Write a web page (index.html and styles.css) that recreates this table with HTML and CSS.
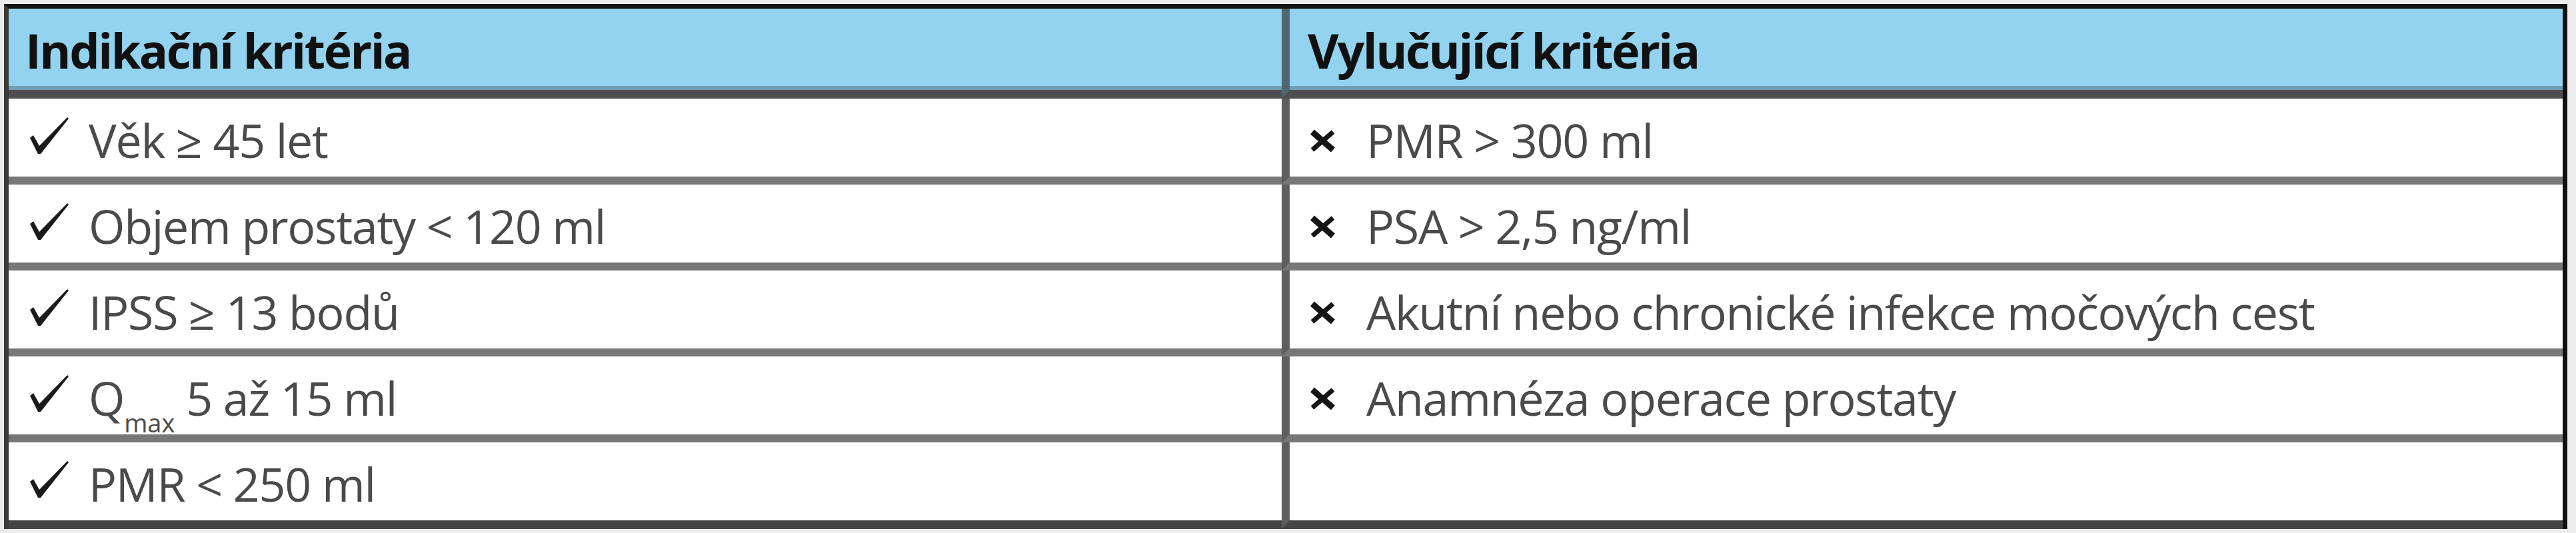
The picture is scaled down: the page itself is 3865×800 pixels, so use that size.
FILE: index.html
```html
<!DOCTYPE html>
<html lang="cs">
<head>
<meta charset="utf-8">
<title>Kritéria</title>
<link rel="stylesheet" href="styles.css">
</head>
<body>
<div class="tbl">
  <div class="cell head c1">Indikační kritéria</div>
  <div class="cell head c2">Vylučující kritéria</div>

  <div class="cell c1"><span class="ico chk"><svg viewBox="0 0 60 56" width="60" height="56"><path d="M0 32 L5 28 L14 44 L56 1 L58 3 L16 56 L12 56 Z"/></svg></span><span class="txt">Věk ≥ 45 let</span></div>
  <div class="cell c2"><span class="ico crs"><svg viewBox="0 0 45 37" width="45" height="37"><path d="M7 5 L38 32" stroke-width="9"/><path d="M38 5 L7 32" stroke-width="7"/></svg></span><span class="txt">PMR &gt; 300 ml</span></div>

  <div class="cell c1"><span class="ico chk"><svg viewBox="0 0 60 56" width="60" height="56"><path d="M0 32 L5 28 L14 44 L56 1 L58 3 L16 56 L12 56 Z"/></svg></span><span class="txt">Objem prostaty &lt; 120 ml</span></div>
  <div class="cell c2"><span class="ico crs"><svg viewBox="0 0 45 37" width="45" height="37"><path d="M7 5 L38 32" stroke-width="9"/><path d="M38 5 L7 32" stroke-width="7"/></svg></span><span class="txt">PSA &gt; 2,5 ng/ml</span></div>

  <div class="cell c1"><span class="ico chk"><svg viewBox="0 0 60 56" width="60" height="56"><path d="M0 32 L5 28 L14 44 L56 1 L58 3 L16 56 L12 56 Z"/></svg></span><span class="txt">IPSS ≥ 13 bodů</span></div>
  <div class="cell c2"><span class="ico crs"><svg viewBox="0 0 45 37" width="45" height="37"><path d="M7 5 L38 32" stroke-width="9"/><path d="M38 5 L7 32" stroke-width="7"/></svg></span><span class="txt">Akutní nebo chronické infekce močových cest</span></div>

  <div class="cell c1"><span class="ico chk"><svg viewBox="0 0 60 56" width="60" height="56"><path d="M0 32 L5 28 L14 44 L56 1 L58 3 L16 56 L12 56 Z"/></svg></span><span class="txt">Q<sub class="sub">max</sub> 5 až 15 ml</span></div>
  <div class="cell c2"><span class="ico crs"><svg viewBox="0 0 45 37" width="45" height="37"><path d="M7 5 L38 32" stroke-width="9"/><path d="M38 5 L7 32" stroke-width="7"/></svg></span><span class="txt">Anamnéza operace prostaty</span></div>

  <div class="cell c1 last"><span class="ico chk"><svg viewBox="0 0 60 56" width="60" height="56"><path d="M0 32 L5 28 L14 44 L56 1 L58 3 L16 56 L12 56 Z"/></svg></span><span class="txt">PMR &lt; 250 ml</span></div>
  <div class="cell c2 last"></div>
</div>
</body>
</html>
```
FILE: styles.css
```css
html, body {
  margin: 0;
  padding: 0;
}
body {
  background: #ececec;
  padding: 6px 0 0 6px;
  font-family: "Open Sans", "Noto Sans", sans-serif;
}
.tbl {
  display: grid;
  grid-template-columns: 1910px 1922px;
  width: 3832px;
  border-top: 7px solid #141414;
  border-left: 7px solid #3a3a3a;
  border-right: 7px solid #111111;
  background: #ffffff;
}
.cell {
  box-sizing: border-box;
  height: 129px;
  display: flex;
  align-items: flex-start;
  border-bottom: 12px solid #777777;
  padding-top: 15px;
  font-size: 70px;
  line-height: 95px;
  letter-spacing: -1.3px;
  color: #4a4a4a;
  white-space: nowrap;
}
.cell.c1 {
  padding-left: 32px;
}
.cell.c2 {
  border-left: 12px solid #5e5e5e;
  padding-left: 27px;
}
.cell.last {
  height: 130px;
  border-bottom: 13px solid #454545;
}
.cell.head {
  height: 135px;
  background: #93d3ef;
  border-bottom: 13px solid #4f4f4f;
  box-shadow: inset 0 -6px 0 #6e9fb2;
  padding-top: 13px;
  font-size: 72px;
  line-height: 98px;
  font-weight: 700;
  letter-spacing: -2.5px;
  color: #111111;
}
.cell.head.c1 {
  padding-left: 25px;
}
.cell.head.c2 {
  border-left-color: #4d6670;
  padding-left: 27px;
}
.ico {
  flex: none;
  width: 88px;
  display: block;
}
.ico svg {
  display: block;
}
.chk {
  margin-top: 12px;
}
.chk path {
  fill: #1a1a1a;
}
.crs {
  margin-top: 30px;
}
.crs path {
  stroke: #151515;
  stroke-linecap: butt;
  fill: none;
}
.txt {
  display: block;
}
.sub {
  font-size: 38px;
  line-height: 0;
  vertical-align: -25px;
  letter-spacing: 0;
}
```
